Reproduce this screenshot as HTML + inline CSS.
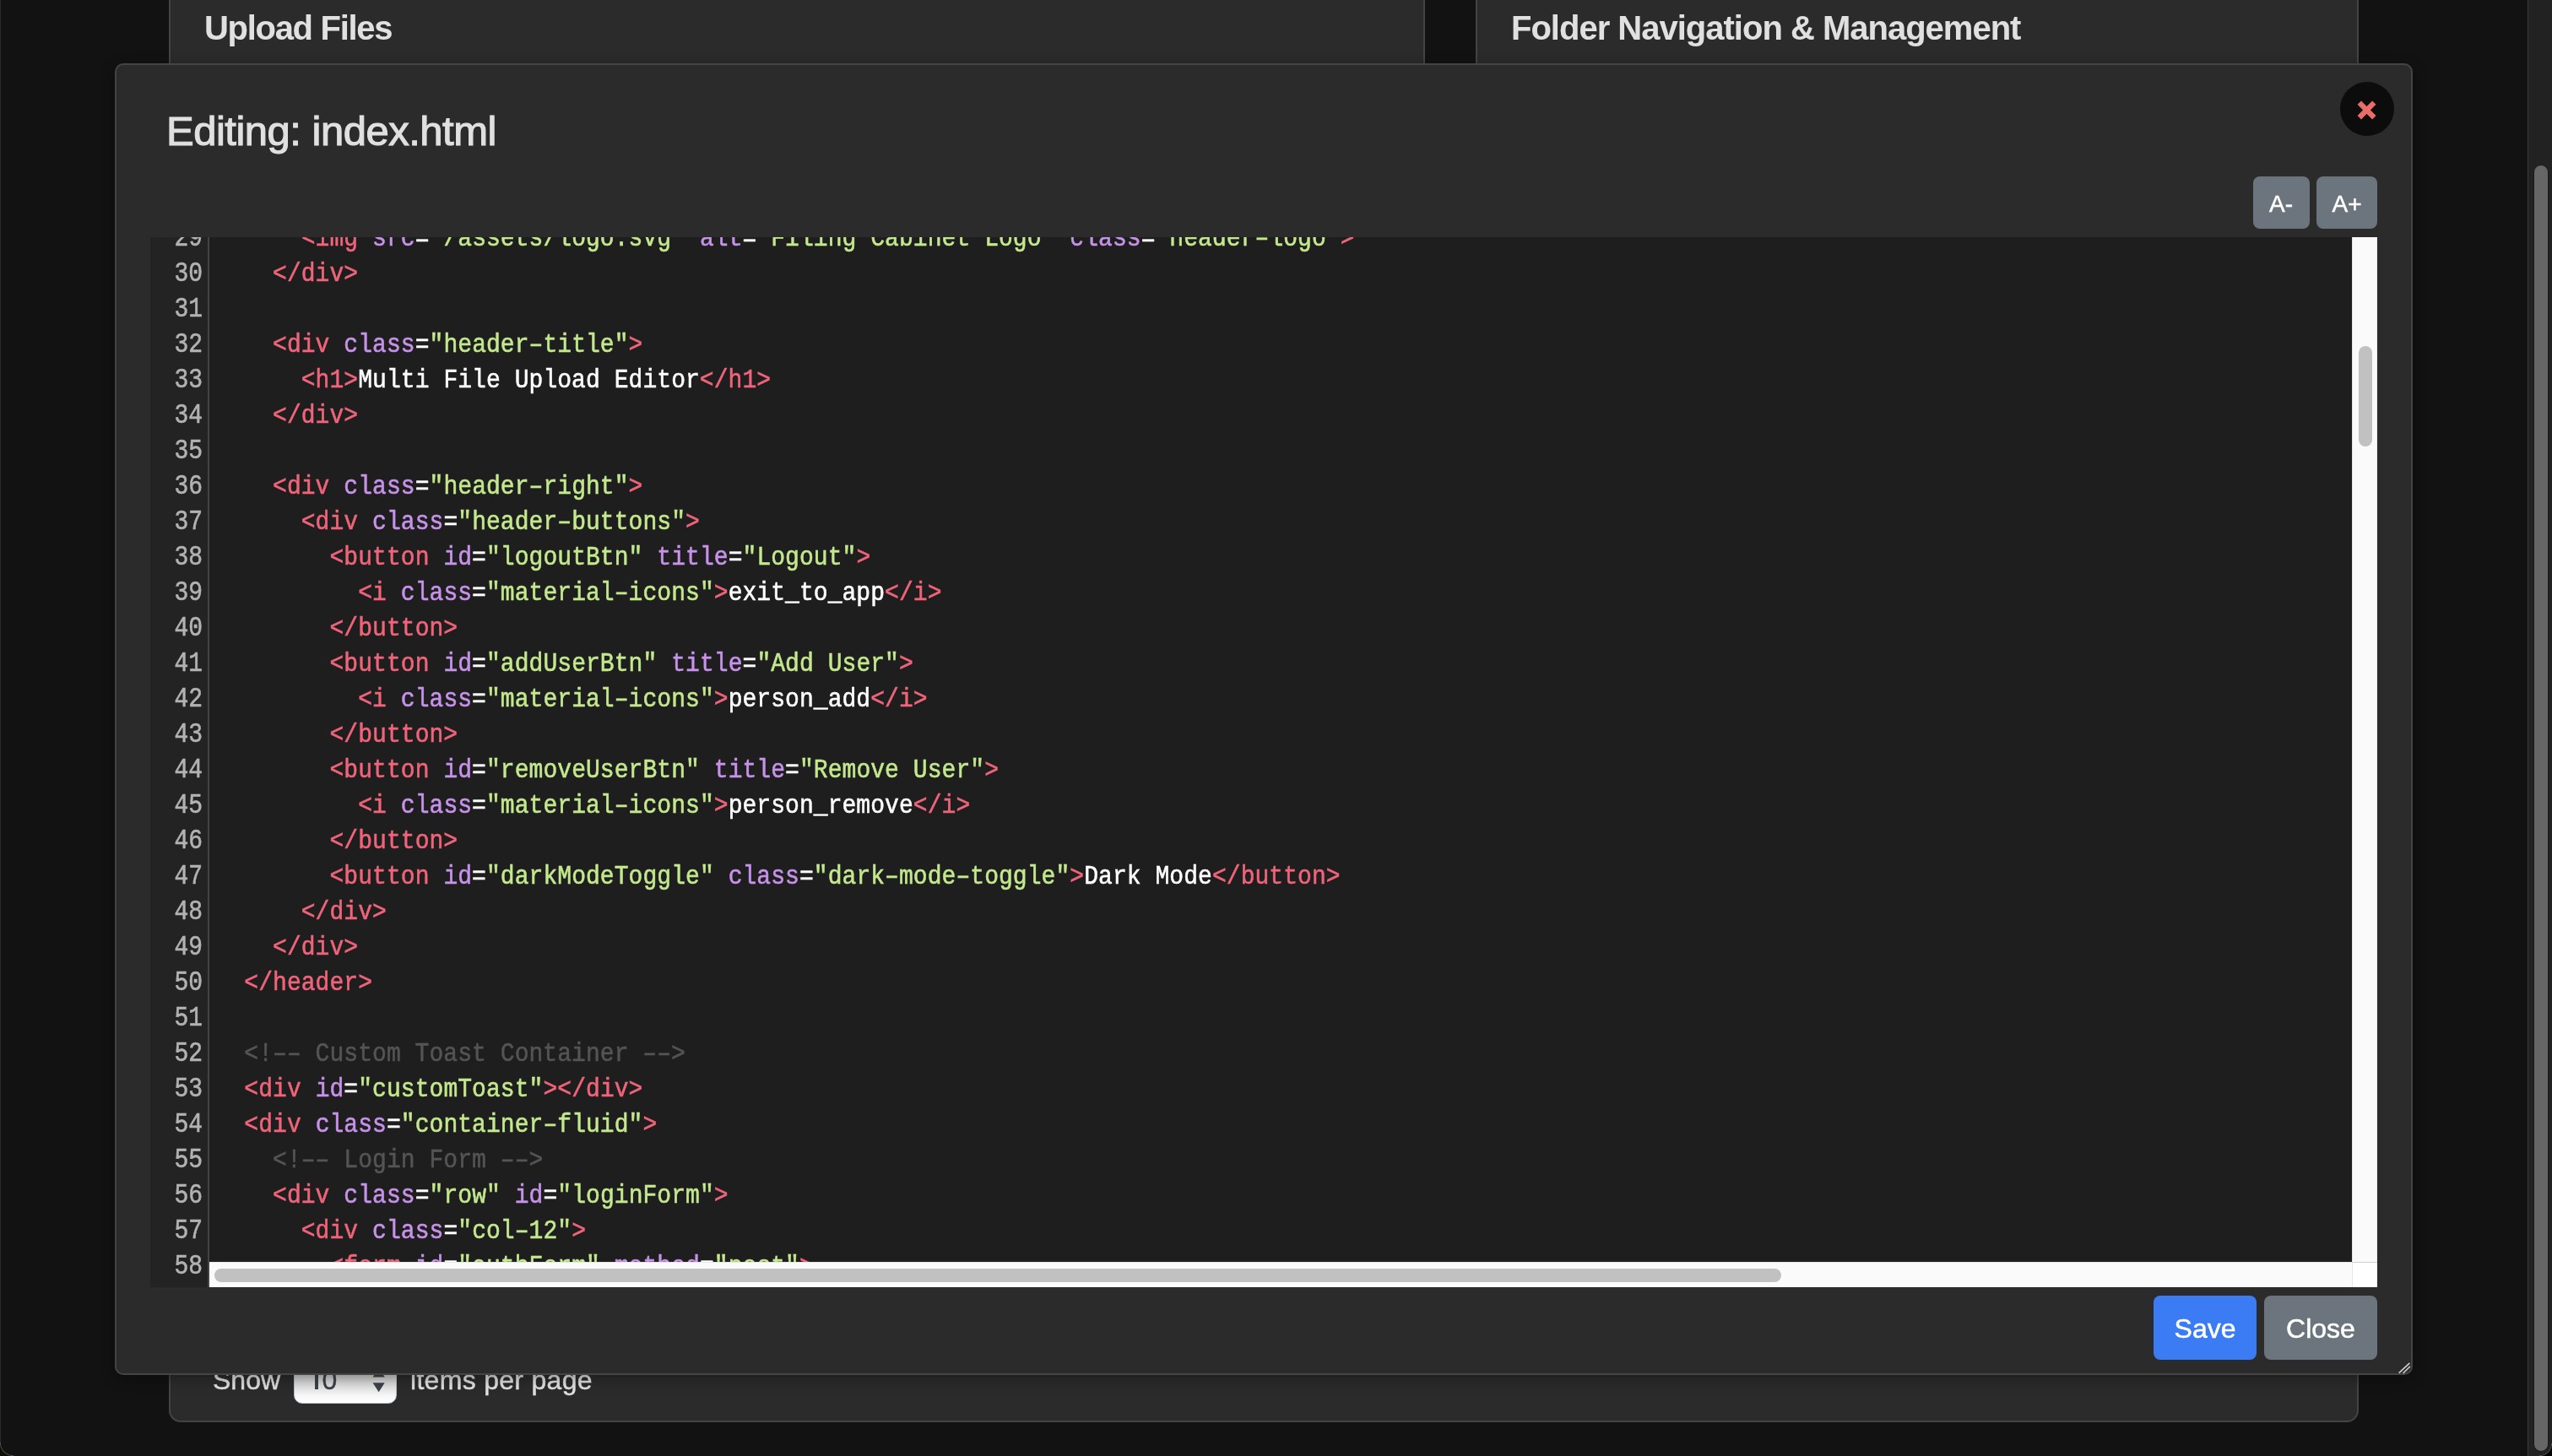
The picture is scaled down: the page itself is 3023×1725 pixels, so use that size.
<!DOCTYPE html>
<html>
<head>
<meta charset="utf-8">
<style>
html,body{margin:0;padding:0;}
body{width:3023px;height:1725px;overflow:hidden;background:#121212;position:relative;font-family:"Liberation Sans",sans-serif;}
.abs{position:absolute;}
.card{position:absolute;background:#2b2b2b;border:2px solid #444;box-sizing:border-box;border-radius:12px;}
.h5{position:absolute;color:#e0e0e0;font-weight:700;font-size:40px;white-space:nowrap;line-height:1;}
.modal{position:absolute;left:136px;top:75px;width:2722px;height:1554px;box-sizing:border-box;background:#2b2b2b;border:2px solid #444;border-radius:10px;box-shadow:0 4px 16px rgba(0,0,0,0.35);}
.title{position:absolute;left:197px;top:131px;color:#e0e0e0;font-size:49px;letter-spacing:-0.5px;-webkit-text-stroke:1.1px #e0e0e0;white-space:nowrap;line-height:1;}
.btn{position:absolute;box-sizing:border-box;color:#fff;-webkit-text-stroke:0.5px #fff;text-align:center;border-radius:8px;white-space:nowrap;}
.editor{position:absolute;left:178px;top:281px;width:2638px;height:1244px;overflow:hidden;background:#1e1e1e;}
.gutter{position:absolute;left:0;top:0;width:68px;height:100%;background:#232323;border-right:2px solid #444;}
.lines{position:absolute;left:0;top:-18px;will-change:transform;-webkit-text-stroke:0.5px currentColor;font-family:"Liberation Mono",monospace;font-size:28px;line-height:42px;white-space:pre;letter-spacing:0.057px;}
.ln{position:absolute;left:0;width:62px;text-align:right;color:#b2b2b2;transform:scaleY(1.18);transform-origin:0 28px;letter-spacing:0;}
.code{position:absolute;left:111.3px;color:#ffffff;transform:scaleY(1.15);transform-origin:0 28px;}
.t{color:#f0647a}.a{color:#c792ea}.s{color:#c3e88d}.c{color:#545454}
</style>
</head>
<body>
<div id="root" style="position:absolute;left:0;top:0;width:3023px;height:1725px;will-change:transform;">
<!-- background cards -->
<div class="card" style="left:200px;top:-40px;width:1488px;height:400px;border-radius:12px;"></div>
<div class="h5" style="left:242px;top:13px;letter-spacing:-1.3px;">Upload Files</div>
<div class="card" style="left:1748px;top:-40px;width:1046px;height:400px;"></div>
<div class="h5" style="left:1790px;top:13px;letter-spacing:-1px;">Folder Navigation &amp; Management</div>
<div class="card" style="left:200px;top:1200px;width:2594px;height:485px;border-radius:14px;"></div>
<div class="abs" style="left:252px;top:1619px;color:#e0e0e0;font-size:32px;line-height:1;-webkit-text-stroke:0.4px #e0e0e0;">Show</div>
<div class="abs" style="left:348px;top:1600px;width:122px;height:63px;border-radius:10px;background:linear-gradient(#bdbdbd 0%,#cdcdcd 48%,#e4e4e4 72%,#f8f8f8 88%,#fff 100%);box-sizing:border-box;border:1.5px solid #b4bcc6;"></div>
<div class="abs" style="left:373.3px;top:1622px;width:3.6px;height:24.4px;background:#3d4148;"></div><div class="abs" style="left:381.5px;top:1619px;color:#3d4148;font-size:32px;line-height:1;-webkit-text-stroke:0.4px #3d4148;">0</div>
<svg class="abs" style="left:440px;top:1620px;" width="18" height="32" viewBox="440 1620 18 32"><polygon points="441.6,1631.6 455.7,1631.6 448.65,1620.6" fill="#3d4148"/><polygon points="441.6,1638.2 455.7,1638.2 448.65,1649.2" fill="#3d4148"/></svg>
<div class="abs" style="left:486px;top:1619px;color:#e0e0e0;font-size:32px;line-height:1;letter-spacing:0.3px;-webkit-text-stroke:0.4px #e0e0e0;">items per page</div>

<!-- modal -->
<div class="modal"></div>
<div class="title">Editing: index.html</div>

<!-- close circle -->
<div class="abs" style="left:2772px;top:97px;width:64px;height:64px;border-radius:50%;background:#0c0c0c;"></div>
<svg class="abs" style="left:2772px;top:97px;" width="64" height="64" viewBox="2772 97 64 64"><g stroke="#ea6d68" stroke-width="6.2" stroke-linecap="butt"><line x1="2794.8" y1="121.6" x2="2812.3" y2="139.2"/><line x1="2812.3" y1="121.6" x2="2794.8" y2="139.2"/></g></svg>

<div class="btn" style="left:2669px;top:209px;width:67px;height:62px;background:#6c757d;font-size:28px;line-height:66px;text-indent:-1px;">A-</div>
<div class="btn" style="left:2744px;top:209px;width:72px;height:62px;background:#6c757d;font-size:28px;line-height:66px;">A+</div>

<div class="editor">
  <div class="gutter"></div>
  <div id="lines" class="lines">
<div class="ln" style="top:0px">29</div><div class="code" style="top:0px">    <span class="t">&lt;img</span> <span class="a">src</span>=<span class="s">&quot;/assets/logo.svg&quot;</span> <span class="a">alt</span>=<span class="s">&quot;Filing Cabinet Logo&quot;</span> <span class="a">class</span>=<span class="s">&quot;header&#8211;logo&quot;</span><span class="t">&gt;</span></div>
<div class="ln" style="top:42px">30</div><div class="code" style="top:42px">  <span class="t">&lt;/div</span><span class="t">&gt;</span></div>
<div class="ln" style="top:84px">31</div><div class="code" style="top:84px"></div>
<div class="ln" style="top:126px">32</div><div class="code" style="top:126px">  <span class="t">&lt;div</span> <span class="a">class</span>=<span class="s">&quot;header&#8211;title&quot;</span><span class="t">&gt;</span></div>
<div class="ln" style="top:168px">33</div><div class="code" style="top:168px">    <span class="t">&lt;h1</span><span class="t">&gt;</span>Multi File Upload Editor<span class="t">&lt;/h1</span><span class="t">&gt;</span></div>
<div class="ln" style="top:210px">34</div><div class="code" style="top:210px">  <span class="t">&lt;/div</span><span class="t">&gt;</span></div>
<div class="ln" style="top:252px">35</div><div class="code" style="top:252px"></div>
<div class="ln" style="top:294px">36</div><div class="code" style="top:294px">  <span class="t">&lt;div</span> <span class="a">class</span>=<span class="s">&quot;header&#8211;right&quot;</span><span class="t">&gt;</span></div>
<div class="ln" style="top:336px">37</div><div class="code" style="top:336px">    <span class="t">&lt;div</span> <span class="a">class</span>=<span class="s">&quot;header&#8211;buttons&quot;</span><span class="t">&gt;</span></div>
<div class="ln" style="top:378px">38</div><div class="code" style="top:378px">      <span class="t">&lt;button</span> <span class="a">id</span>=<span class="s">&quot;logoutBtn&quot;</span> <span class="a">title</span>=<span class="s">&quot;Logout&quot;</span><span class="t">&gt;</span></div>
<div class="ln" style="top:420px">39</div><div class="code" style="top:420px">        <span class="t">&lt;i</span> <span class="a">class</span>=<span class="s">&quot;material&#8211;icons&quot;</span><span class="t">&gt;</span>exit_to_app<span class="t">&lt;/i</span><span class="t">&gt;</span></div>
<div class="ln" style="top:462px">40</div><div class="code" style="top:462px">      <span class="t">&lt;/button</span><span class="t">&gt;</span></div>
<div class="ln" style="top:504px">41</div><div class="code" style="top:504px">      <span class="t">&lt;button</span> <span class="a">id</span>=<span class="s">&quot;addUserBtn&quot;</span> <span class="a">title</span>=<span class="s">&quot;Add User&quot;</span><span class="t">&gt;</span></div>
<div class="ln" style="top:546px">42</div><div class="code" style="top:546px">        <span class="t">&lt;i</span> <span class="a">class</span>=<span class="s">&quot;material&#8211;icons&quot;</span><span class="t">&gt;</span>person_add<span class="t">&lt;/i</span><span class="t">&gt;</span></div>
<div class="ln" style="top:588px">43</div><div class="code" style="top:588px">      <span class="t">&lt;/button</span><span class="t">&gt;</span></div>
<div class="ln" style="top:630px">44</div><div class="code" style="top:630px">      <span class="t">&lt;button</span> <span class="a">id</span>=<span class="s">&quot;removeUserBtn&quot;</span> <span class="a">title</span>=<span class="s">&quot;Remove User&quot;</span><span class="t">&gt;</span></div>
<div class="ln" style="top:672px">45</div><div class="code" style="top:672px">        <span class="t">&lt;i</span> <span class="a">class</span>=<span class="s">&quot;material&#8211;icons&quot;</span><span class="t">&gt;</span>person_remove<span class="t">&lt;/i</span><span class="t">&gt;</span></div>
<div class="ln" style="top:714px">46</div><div class="code" style="top:714px">      <span class="t">&lt;/button</span><span class="t">&gt;</span></div>
<div class="ln" style="top:756px">47</div><div class="code" style="top:756px">      <span class="t">&lt;button</span> <span class="a">id</span>=<span class="s">&quot;darkModeToggle&quot;</span> <span class="a">class</span>=<span class="s">&quot;dark&#8211;mode&#8211;toggle&quot;</span><span class="t">&gt;</span>Dark Mode<span class="t">&lt;/button</span><span class="t">&gt;</span></div>
<div class="ln" style="top:798px">48</div><div class="code" style="top:798px">    <span class="t">&lt;/div</span><span class="t">&gt;</span></div>
<div class="ln" style="top:840px">49</div><div class="code" style="top:840px">  <span class="t">&lt;/div</span><span class="t">&gt;</span></div>
<div class="ln" style="top:882px">50</div><div class="code" style="top:882px"><span class="t">&lt;/header</span><span class="t">&gt;</span></div>
<div class="ln" style="top:924px">51</div><div class="code" style="top:924px"></div>
<div class="ln" style="top:966px">52</div><div class="code" style="top:966px"><span class="c">&lt;!&#8211;&#8211; Custom Toast Container &#8211;&#8211;&gt;</span></div>
<div class="ln" style="top:1008px">53</div><div class="code" style="top:1008px"><span class="t">&lt;div</span> <span class="a">id</span>=<span class="s">&quot;customToast&quot;</span><span class="t">&gt;</span><span class="t">&lt;/div</span><span class="t">&gt;</span></div>
<div class="ln" style="top:1050px">54</div><div class="code" style="top:1050px"><span class="t">&lt;div</span> <span class="a">class</span>=<span class="s">&quot;container&#8211;fluid&quot;</span><span class="t">&gt;</span></div>
<div class="ln" style="top:1092px">55</div><div class="code" style="top:1092px">  <span class="c">&lt;!&#8211;&#8211; Login Form &#8211;&#8211;&gt;</span></div>
<div class="ln" style="top:1134px">56</div><div class="code" style="top:1134px">  <span class="t">&lt;div</span> <span class="a">class</span>=<span class="s">&quot;row&quot;</span> <span class="a">id</span>=<span class="s">&quot;loginForm&quot;</span><span class="t">&gt;</span></div>
<div class="ln" style="top:1176px">57</div><div class="code" style="top:1176px">    <span class="t">&lt;div</span> <span class="a">class</span>=<span class="s">&quot;col&#8211;12&quot;</span><span class="t">&gt;</span></div>
<div class="ln" style="top:1218px">58</div><div class="code" style="top:1218px">      <span class="t">&lt;form</span> <span class="a">id</span>=<span class="s">&quot;authForm&quot;</span> <span class="a">method</span>=<span class="s">&quot;post&quot;</span><span class="t">&gt;</span></div>
</div>
  <div class="abs" style="left:2608px;top:0;width:30px;height:1214px;background:#fafafa;border-left:1px solid #e3e3e3;border-right:1px solid #ececec;box-sizing:border-box;"></div>
  <div class="abs" style="left:2616px;top:129px;width:16px;height:119px;background:#c1c1c1;border-radius:8px;"></div>
  <div class="abs" style="left:70px;top:1214px;width:2538px;height:30px;background:#fafafa;border-top:1px solid #e6e6e6;box-sizing:border-box;"></div>
  <div class="abs" style="left:76px;top:1222px;width:1856px;height:16px;background:#c1c1c1;border-radius:8px;"></div>
  <div class="abs" style="left:2608px;top:1214px;width:30px;height:30px;background:#fff;border-top:1px solid #cfcfcf;border-left:1px solid #e6e6e6;box-sizing:border-box;"></div>
</div>

<div class="btn" style="left:2551px;top:1535px;width:122px;height:76px;background:#3b7cf5;font-size:32px;line-height:78px;">Save</div>
<div class="btn" style="left:2682px;top:1535px;width:134px;height:76px;background:#6c757d;font-size:32px;line-height:78px;">Close</div>

<svg class="abs" style="left:2836px;top:1608px;" width="22" height="22" viewBox="2836 1608 22 22"><g stroke="#cfcfcf" stroke-width="1.6"><line x1="2841.7" y1="1626.7" x2="2854.4" y2="1614.8"/><line x1="2846.6" y1="1627" x2="2855" y2="1618.8"/></g></svg>
<!-- page scrollbar -->
<div class="abs" style="left:2994px;top:0;width:29px;height:1725px;background:#222;border-left:1px solid #3a3a3a;box-sizing:border-box;"></div>
<div class="abs" style="left:3001px;top:195px;width:18px;height:1525px;background:#666;border:1px solid #1a1a1a;box-sizing:border-box;border-radius:9px;"></div>
<div class="abs" style="left:0;top:0;width:1px;height:1725px;background:#2a2a2a;"></div>
<div class="abs" style="left:0;top:1709px;width:16px;height:16px;background:radial-gradient(circle at 16px 0px,transparent 15px,#555 15.6px,#0a0f08 16.6px);"></div>
<div class="abs" style="left:3008px;top:1710px;width:15px;height:15px;background:radial-gradient(circle at 0px 0px,transparent 14px,#555 14.6px,#000 15.6px);"></div>
</div>
</body>
</html>
